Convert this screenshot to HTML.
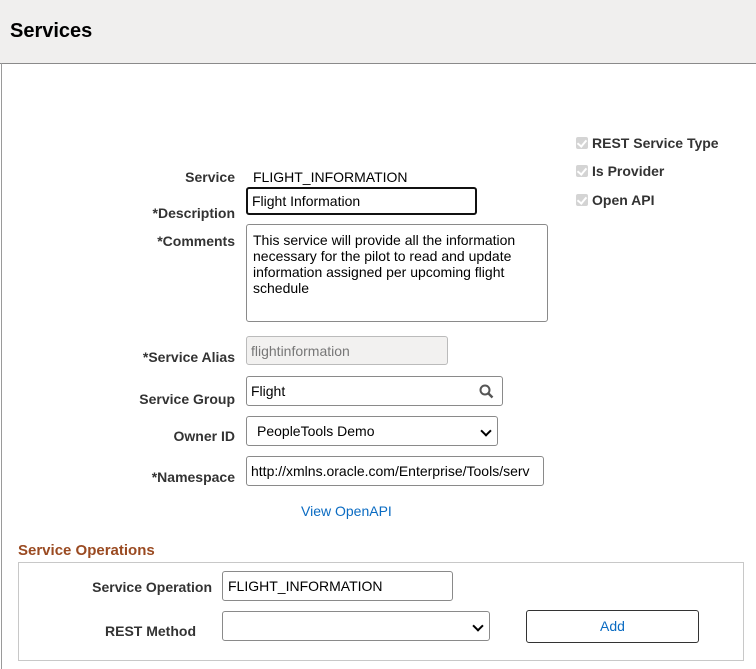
<!DOCTYPE html>
<html><head><style>
body{margin:0;width:756px;height:669px;overflow:hidden;background:#fff;font-family:"Liberation Sans",Arial,sans-serif;position:relative}
.a{position:absolute}
.hdr{left:0;top:0;width:756px;height:63px;background:#f0efee;border-bottom:1px solid #8a8a8a}
.vl{left:1px;top:63px;width:1px;height:606px;background:#9a9a9a}
.lbl{position:absolute;font-size:14px;font-weight:bold;color:#333;text-align:right;line-height:16px}
.inp{position:absolute;box-sizing:border-box;border:1px solid #8a8a8a;border-radius:3px;background:#fff;font-size:14px;color:#000;padding-left:6px;display:flex;align-items:center}
.cb{position:absolute;left:576px;width:12px;height:12px;background:#d4d4d4;border-radius:2px}
.cb:after{content:"";position:absolute;left:3px;top:1px;width:4px;height:7px;border:solid #fff;border-width:0 2px 2px 0;transform:rotate(40deg)}
.ct{position:absolute;left:592px;font-size:14px;font-weight:bold;color:#333}
.chev{position:absolute;right:7px;top:10px;width:6px;height:6px;border:solid #000;border-width:0 2px 2px 0;transform:rotate(45deg)}
</style></head><body>
<div class="a hdr"></div>
<div class="a" style="left:10px;top:20px;font-size:20px;font-weight:bold;color:#000">Services</div>
<div class="a vl"></div>

<div class="cb" style="top:137px"></div><div class="ct" style="top:135px">REST Service Type</div>
<div class="cb" style="top:165px"></div><div class="ct" style="top:163px">Is Provider</div>
<div class="cb" style="top:194px"></div><div class="ct" style="top:192px">Open API</div>

<div class="lbl" style="right:521px;top:169px">Service</div>
<div class="a" style="left:253px;top:169px;font-size:14px;color:#000">FLIGHT_INFORMATION</div>
<div class="inp" style="left:246px;top:187px;width:231px;height:28px;border:2px solid #111;padding-left:4px">Flight Information</div>
<div class="lbl" style="right:521px;top:205px">*Description</div>
<div class="lbl" style="right:521px;top:233px">*Comments</div>
<div class="inp" style="left:246px;top:224px;width:302px;height:98px;align-items:flex-start;padding-top:7px;line-height:16px;display:block">This service will provide all the information necessary for the pilot to read and update information assigned per upcoming flight schedule</div>

<div class="lbl" style="right:521px;top:349px">*Service Alias</div>
<div class="inp" style="left:246px;top:336px;width:202px;height:29px;background:#f2f1f0;color:#777;border-color:#bbb;align-items:flex-start;padding-top:6px;padding-left:4px">flightinformation</div>
<div class="lbl" style="right:521px;top:391px">Service Group</div>
<div class="inp" style="left:246px;top:376px;width:257px;height:30px;align-items:flex-start;padding-top:6px;padding-left:4px">Flight
<svg style="position:absolute;right:8px;top:7px" width="15" height="15" viewBox="0 0 15 15"><circle cx="6" cy="6" r="4.5" fill="none" stroke="#555" stroke-width="2"/><path d="M9.5 9.5L13.5 13.5" stroke="#555" stroke-width="2.4"/></svg></div>
<div class="lbl" style="right:521px;top:428px">Owner ID</div>
<div class="inp" style="left:246px;top:416px;width:252px;height:30px;padding-left:10px">PeopleTools Demo<span class="chev"></span></div>
<div class="lbl" style="right:521px;top:469px">*Namespace</div>
<div class="inp" style="left:246px;top:456px;width:298px;height:30px;overflow:hidden;white-space:nowrap;padding-left:4px">http://xmlns.oracle.com/Enterprise/Tools/serv</div>
<div class="a" style="left:301px;top:503px;font-size:14px;color:#0a6bc2">View OpenAPI</div>

<div class="a" style="left:18px;top:542px;font-size:15px;font-weight:bold;color:#9a4a21">Service Operations</div>
<div class="a" style="left:18px;top:562px;width:724px;height:97px;border:1px solid #c8c8c8"></div>
<div class="lbl" style="right:544px;top:579px">Service Operation</div>
<div class="inp" style="left:222px;top:571px;width:231px;height:30px;padding-left:5px">FLIGHT_INFORMATION</div>
<div class="lbl" style="right:560px;top:623px">REST Method</div>
<div class="inp" style="left:222px;top:611px;width:268px;height:30px"><span class="chev"></span></div>
<div class="a" style="left:526px;top:610px;width:173px;height:33px;box-sizing:border-box;border:1px solid #333;border-radius:3px;text-align:center;line-height:30px;font-size:14px;color:#0a6bc2">Add</div>
</body></html>
